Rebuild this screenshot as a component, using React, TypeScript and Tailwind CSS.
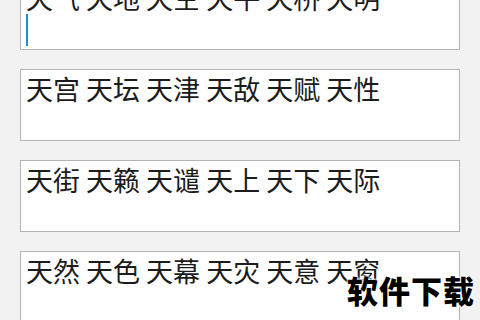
import React from 'react'

const rows = [
  '天气 天地 天空 天平 天桥 天明',
  '天宫 天坛 天津 天敌 天赋 天性',
  '天街 天籁 天谴 天上 天下 天际',
  '天然 天色 天幕 天灾 天意 天窗',
]

export default function App() {
  return (
    <div className="relative h-[320px] w-[480px] overflow-hidden bg-[#f2f2f2]">
      <div className="-mt-[22px] flex flex-col gap-[19px] pl-[20px] pr-[20px]">
        {rows.map((text, i) => (
          <div
            key={i}
            className="h-[72px] w-[440px] border border-[#b4b4b4] bg-white px-[5px] pt-[3px] text-[27px] leading-[32px] text-[#1c1c1c]"
            style={{ fontFamily: '"Noto Sans CJK SC", "Noto Sans", sans-serif' }}
          >
            <div className="whitespace-pre">{text}</div>
            {i === 0 && <div className="h-[32px] w-[2px] bg-[#1f8fd6]" />}
          </div>
        ))}
      </div>

      {/* watermark */}
      <div
        className="absolute left-[347px] top-[274px] text-[31px] font-black leading-none tracking-[1px] text-black [text-shadow:0_0_3px_#fff,0_0_3px_#fff,0_0_2px_#fff]"
        style={{ fontFamily: '"Noto Sans CJK SC", sans-serif' }}
      >
        软件下载
      </div>
    </div>
  )
}
